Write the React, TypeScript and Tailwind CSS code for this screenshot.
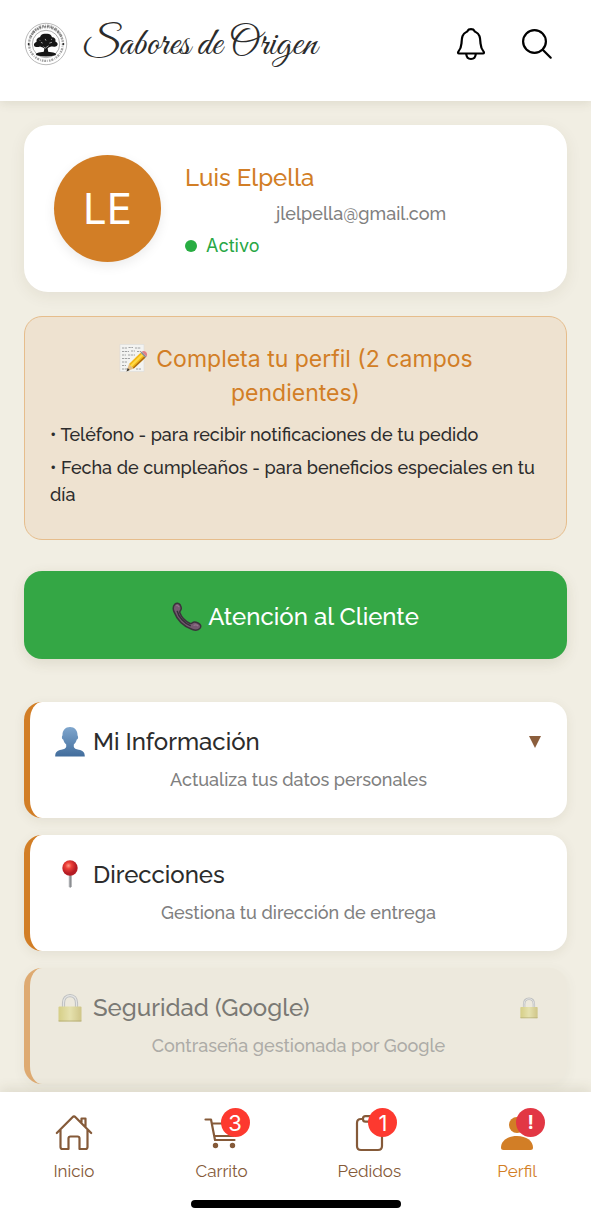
import type { ReactNode } from "react";

const sans = "font-['Raleway','Lato','Noto_Sans',sans-serif]";

function Logo() {
  return (
    <svg viewBox="0 0 52 52" className="size-11" aria-hidden="true">
      <circle cx="26" cy="26" r="24.5" fill="#fff" stroke="#999" strokeWidth="0.8" />
      <circle cx="26" cy="26" r="20" fill="none" stroke="#666" strokeWidth="2.8" strokeDasharray="1.8 1.2 0.8 1.4 2.4 1" opacity="0.6" />
      <path d="M7.500 18C11 9.500 18 4.500 26 4.500S41 9.500 44.500 18" fill="none" stroke="#444" strokeWidth="3" strokeDasharray="2.400 1 1 1.300 3 1.100" opacity="0.500" />
      <circle cx="26" cy="26" r="16.200" fill="#fff" stroke="#777" strokeWidth="0.700" />
      <circle cx="5.500" cy="26" r="1.100" fill="#222" />
      <circle cx="46.500" cy="26" r="1.100" fill="#222" />
      <g fill="#161616">
        <path d="M12 28c-1-3 2-4 3-5-1-3 2-5 4-5 0-3 4-5 7-4 3-1 7 1 7 4 3 0 5 2 4 5 2 1 4 3 2 5-2 2-5 1-7 1-2 1-3 1-4 2 0 3 1 5 2 7h-8c1-2 2-4 2-7-2-1-3-1-5-2-3 1-6 1-7-1z" />
        <ellipse cx="26" cy="38" rx="12" ry="2.800" />
      </g>
      <path d="M20 24l2 1M25 20l1 2M30 25l3-1M23 29l2 2 4-3M18 21l1 1M32 20l1 1" stroke="#fff" strokeWidth="0.700" fill="none" />
    </svg>
  );
}

function BellIcon() {
  return (
    <svg viewBox="0 0 34 36" className="h-9 w-[34px]" fill="none" stroke="#000" strokeWidth="2.2" strokeLinejoin="round" aria-hidden="true">
      <path d="M5 27.500h24c1 0 1.300-1.100.6-1.900-2-2.300-2.800-4.500-3.100-8.200-.4-5.800-.3-9-5-11.500-.7-.4-.9-.6-1.200-1.200-.9-2-5.700-2-6.600 0-.3.600-.5.800-1.200 1.200-4.700 2.500-4.600 5.700-5 11.500-.3 3.700-1.100 5.900-3.100 8.200-.7.800-.4 1.900.6 1.900z" />
      <path d="M12.200 27.800c.2 3.200 2.200 5.200 4.800 5.200s4.600-2 4.800-5.200" />
    </svg>
  );
}

function SearchIcon() {
  return (
    <svg viewBox="0 0 34 36" className="h-9 w-[34px]" fill="none" stroke="#000" strokeWidth="2.200" strokeLinecap="round" aria-hidden="true">
      <circle cx="14.500" cy="15.500" r="11.400" />
      <path d="M22.700 23.700l8 8" />
    </svg>
  );
}

function NoteEmoji() {
  return (
    <svg viewBox="0 0 30 30" className="mr-2 inline-block size-[30px] align-[-6px]" aria-hidden="true">
      <path d="M2 1.500h24v27H2z" fill="#f3f3f1" stroke="#dcdcda" strokeWidth="0.6" />
      <path d="M4 5h5M10.500 4.500H15M17 5h6M4 8.500h7M13 8h4M19 8.500h4M4 12h4M10 12h7M4 15.500h8M4 19h5M4 22.500h4M4 26h5M18 26h5" stroke="#8b8d8f" strokeWidth="0.800" strokeDasharray="2.200 .7" />
      <path d="M8.500 28.500l2.500-7.500 4.800 4.500z" fill="#e3bd83" />
      <path d="M8.500 28.500l1.200-3.500 2 2z" fill="#333" />
      <path d="M11 21L22.500 9.800l4.800 4.900L15.800 25.500z" fill="#f3b716" />
      <path d="M12.200 22.200L24 10.800l1.500 1.500-11.700 11.500z" fill="#ffda45" />
      <path d="M14.700 24.700L26.300 13.500l1 1.200-11.500 10.800z" fill="#a96a14" />
      <path d="M22.500 9.800l1.300-1.200 4.800 4.800-1.300 1.300z" fill="#8a8e91" />
      <path d="M23.800 8.600c1.300-1 3-.9 4.200.4 1.200 1.200 1.500 3.200.6 4.400z" fill="#e27f86" />
    </svg>
  );
}

function PhoneEmoji() {
  return (
    <svg viewBox="0 0 32 32" className="size-[30px]" aria-hidden="true">
      <path d="M3 2.500C4.800.7 7.500 1 8.800 3.200c1 1.900 1.500 4.300.4 5.600-.8.9-1.200 1.500-.8 2.700 1.500 4.200 5.600 8.700 10.400 11.200 1.300.7 2 .4 2.900-.5 1.400-1.200 3.700-.9 6 .2 2.900 1.400 3.700 3.500 2.300 5.500-1.400 1.900-5 2.600-8.300 1.500C12.500 26.200 5.200 18.500 2 10 .9 7 1.300 4.200 3 2.500z" fill="#755a70" stroke="#3b333c" strokeWidth="1.600" />
      <path d="M5.500 9.500c1.300 6.500 8 13.500 14.500 16" fill="none" stroke="#34313a" strokeWidth="1.600" />
      <path d="M4.500 4c1.200-.8 2.600 0 3 1.500M23 25c1.800-.9 4-.2 5 .6" fill="none" stroke="#94748c" strokeWidth="1.200" />
    </svg>
  );
}

function PersonEmoji() {
  return (
    <svg viewBox="0 0 32 32" className="size-8" aria-hidden="true">
      <defs>
        <linearGradient id="bust" x2="0" y2="1">
          <stop stopColor="#7fa6cd" />
          <stop offset="1" stopColor="#426d9c" />
        </linearGradient>
      </defs>
      <path d="M16 1c4.600 0 7.500 3.300 7.500 8 0 .8.600 1 .6 2.200 0 1.500-.7 2.100-1.300 2.400-.6 2.300-1.700 4-3 5v2.200c.2 1.700 2.200 2.300 5 3 3.700.9 6 2.100 6 6.700H1.200c0-4.600 2.300-5.800 6-6.700 2.800-.7 4.800-1.300 5-3v-2.200c-1.300-1-2.400-2.700-3-5-.6-.3-1.300-.9-1.300-2.400 0-1.200.6-1.400.6-2.200 0-4.700 2.900-8 7.500-8z" fill="url(#bust)" />
    </svg>
  );
}

function PinEmoji() {
  return (
    <svg viewBox="0 0 32 32" className="size-8" aria-hidden="true">
      <defs>
        <radialGradient id="pinhead" cx="0.400" cy="0.350">
          <stop stopColor="#ff9a86" />
          <stop offset="0.400" stopColor="#ed4038" />
          <stop offset="1" stopColor="#b51c24" />
        </radialGradient>
        <linearGradient id="needle">
          <stop stopColor="#bfc1c4" />
          <stop offset="1" stopColor="#6f7276" />
        </linearGradient>
      </defs>
      <path d="M14.700 15h2.800v12.500L16.100 29l-1.400-1.500z" fill="url(#needle)" />
      <circle cx="16" cy="9" r="7.700" fill="url(#pinhead)" />
    </svg>
  );
}

function LockEmoji({ className }: { className: string }) {
  return (
    <svg viewBox="0 0 32 32" className={className} aria-hidden="true">
      <defs>
        <linearGradient id="brass">
          <stop stopColor="#c4ba4a" />
          <stop offset="0.500" stopColor="#dfda8c" />
          <stop offset="1" stopColor="#b9ab4c" />
        </linearGradient>
      </defs>
      <path d="M9.500 17v-6c0-4.500 2.500-7.300 6.500-7.300s6.500 2.800 6.500 7.300v6" fill="none" stroke="#9ea2aa" strokeWidth="3.200" />
      <path d="M9.500 17v-6c0-4.500 2.500-7.300 6.500-7.300s6.500 2.800 6.500 7.300v6" fill="none" stroke="#dde0e6" strokeWidth="1.200" />
      <rect x="4.500" y="14.500" width="23" height="15" rx="1" fill="url(#brass)" />
      <path d="M4.500 29h23" stroke="#85782a" strokeWidth="0.800" />
    </svg>
  );
}

type SectionProps = {
  icon: ReactNode;
  title: string;
  subtitle: string;
  trailing?: ReactNode;
  disabled?: boolean;
};

function SectionCard({ icon, title, subtitle, trailing, disabled }: SectionProps) {
  return (
    <button
      type="button"
      disabled={disabled}
      className={
        "block w-full rounded-[18px] border-l-[6px] border-[#d27e26] p-6 shadow-[0_3px_12px_rgba(80,70,30,0.08)] " +
        (disabled ? "bg-[#ebe7da] opacity-60" : "bg-white")
      }
    >
      <span className="flex h-8 items-center gap-[7px]">
        {icon}
        <span className="text-2xl font-medium text-[#2c2c2c]">{title}</span>
        <span className="ml-auto flex items-center">{trailing}</span>
      </span>
      <span className="mt-2 block text-center text-lg leading-7 font-medium text-[#808080]">{subtitle}</span>
    </button>
  );
}

function HomeIcon() {
  return (
    <svg viewBox="0 0 40 40" className="size-10" fill="none" stroke="#855a39" strokeWidth="2.200" strokeLinecap="round" strokeLinejoin="round" aria-hidden="true">
      <path d="M2.800 20L18.500 4.200c1-1 2-1 3 0L37.200 20M6.500 17v17c0 1.200.8 2 2 2h6V25.500c0-1.200.8-2 2-2h7c1.200 0 2 .8 2 2V36h6c1.200 0 2-.8 2-2V17M27.500 9.500V5.500h4v8.500" />
    </svg>
  );
}

function CartIcon() {
  return (
    <svg viewBox="0 0 40 40" className="size-10" fill="none" stroke="#855a39" strokeWidth="2.200" strokeLinecap="round" strokeLinejoin="round" aria-hidden="true">
      <path d="M3.500 6.500H9l4 20.500h19.500M10 10.500h24l-2.500 12.500H12.500" />
      <circle cx="13.500" cy="32.500" r="1.600" fill="#855a39" />
      <circle cx="30.500" cy="32.500" r="1.600" fill="#855a39" />
    </svg>
  );
}

function ClipboardIcon() {
  return (
    <svg viewBox="0 0 40 40" className="size-10" fill="none" stroke="#855a39" strokeWidth="2.200" strokeLinejoin="round" aria-hidden="true">
      <path d="M14 6h-2c-2.500 0-4 1.500-4 4v23c0 2.500 1.500 4 4 4h17c2.500 0 4-1.500 4-4V10c0-2.500-1.500-4-4-4h-2" />
      <rect x="14" y="3.200" width="13" height="5.500" rx="2.500" />
    </svg>
  );
}

function ProfileIcon() {
  return (
    <svg viewBox="0 0 40 40" className="size-10" fill="#d27e26" aria-hidden="true">
      <circle cx="20" cy="12" r="8" />
      <path d="M4 34.500C4 28 10.500 23 20 23s16 5 16 11.500c0 1.700-.8 2.500-2.500 2.500h-27C4.800 37 4 36.200 4 34.500z" />
    </svg>
  );
}

const tabs = [
  { label: "Inicio", icon: <HomeIcon />, badge: "", badgeStyle: "", tone: "text-[#855a39]" },
  { label: "Carrito", icon: <CartIcon />, badge: "3", badgeStyle: "bg-[#fd392f] text-[22px]", tone: "text-[#855a39]" },
  { label: "Pedidos", icon: <ClipboardIcon />, badge: "1", badgeStyle: "bg-[#fd392f] text-[22px]", tone: "text-[#855a39]" },
  { label: "Perfil", icon: <ProfileIcon />, badge: "!", badgeStyle: "bg-[#e23744] text-[19px] font-bold", tone: "text-[#d27e26]" },
];

export default function App() {
  return (
    <div className={"flex min-h-screen flex-col bg-[#f1eee3] text-[#2c2c2c] " + sans}>
      <header className="flex h-[101px] items-start bg-white px-6 pt-[22px] shadow-[0_2px_10px_rgba(80,70,30,0.12)]">
        <Logo />
        <h1 className="ml-3.5 font-['Great_Vibes','Liberation_Serif',cursive] text-[40px] leading-[46px] whitespace-nowrap">Sabores de Origen</h1>
        <div className="ml-auto flex items-center gap-8 pt-1 pr-[13px]">
          <button type="button" aria-label="Notificaciones"><BellIcon /></button>
          <button type="button" aria-label="Buscar"><SearchIcon /></button>
        </div>
      </header>

      <main className="flex-1 px-6 pt-6 pb-2">
        <section className="flex items-center gap-6 rounded-3xl bg-white p-[30px] shadow-[0_4px_16px_rgba(80,70,30,0.08)]">
          <div className="flex size-[107px] shrink-0 items-center justify-center rounded-full bg-[#d27e26] font-['Inter',sans-serif] text-[42px] text-white shadow-[0_4px_12px_rgba(0,0,0,0.08)]">
            LE
          </div>
          <div className="min-w-0 flex-1 pt-0.5">
            <h2 className="text-2xl leading-9 font-medium text-[#d27e26]">Luis Elpella</h2>
            <p className="text-center text-lg leading-9 font-medium text-[#808080]">jlelpella@gmail.com</p>
            <p className="flex items-center gap-[9px] font-['Inter',sans-serif] text-lg leading-7 text-[#28a745]">
              <span className="size-3 rounded-full bg-[#28ad42]" />
              Activo
            </p>
          </div>
        </section>

        <section className="mt-6 rounded-[18px] border border-[#e6bd8c] bg-[#eee2d0] px-[25px] pt-[25px] pb-[31px]">
          <h3 className="px-4 text-center font-['Inter',sans-serif] text-[23px] leading-[34px] text-[#d27e26]">
            <NoteEmoji />
            Completa tu perfil (2 campos pendientes)
          </h3>
          <ul className="mt-[11px] space-y-1.5 text-lg leading-[27px] font-medium">
            <li>• Teléfono - para recibir notificaciones de tu pedido</li>
            <li>• Fecha de cumpleaños - para beneficios especiales en tu día</li>
          </ul>
        </section>

        <button type="button" className="mt-[31px] flex h-[88px] w-full items-center justify-center gap-1.5 rounded-[18px] bg-[#34a745] pt-1 text-2xl font-medium text-white shadow-[0_4px_14px_rgba(80,70,30,0.12)]">
          <PhoneEmoji />
          Atención al Cliente
        </button>

        <div className="mt-[43px] space-y-[17px]">
          <SectionCard
            icon={<PersonEmoji />}
            title="Mi Información"
            subtitle="Actualiza tus datos personales"
            trailing={
              <svg viewBox="0 0 12 12" className="mr-0.5 size-3" aria-hidden="true">
                <path d="M0 0h12L6 12z" fill="#8b5e3c" />
              </svg>
            }
          />
          <SectionCard icon={<PinEmoji />} title="Direcciones" subtitle="Gestiona tu dirección de entrega" />
          <SectionCard
            icon={<LockEmoji className="size-8" />}
            title="Seguridad (Google)"
            subtitle="Contraseña gestionada por Google"
            trailing={<LockEmoji className="mr-0.5 size-6" />}
            disabled
          />
        </div>
      </main>

      <nav className="sticky bottom-0 h-32 bg-white pt-5 shadow-[0_-3px_12px_rgba(80,70,30,0.12)]">
        <div className="grid grid-cols-4">
          {tabs.map((tab) => (
            <a key={tab.label} href="#" className={"flex flex-col items-center gap-1 pt-px " + tab.tone}>
              <span className="relative">
                {tab.icon}
                {tab.badge && (
                  <span className={"absolute -top-[5px] -right-2 flex size-[29px] items-center justify-center rounded-full font-['Inter',sans-serif] leading-none text-white " + tab.badgeStyle}>
                    {tab.badge}
                  </span>
                )}
              </span>
              <span className="text-[17px] leading-7">{tab.label}</span>
            </a>
          ))}
        </div>
        <div className="mx-auto mt-[15px] h-2 w-[210px] rounded-full bg-black" />
      </nav>
    </div>
  );
}
